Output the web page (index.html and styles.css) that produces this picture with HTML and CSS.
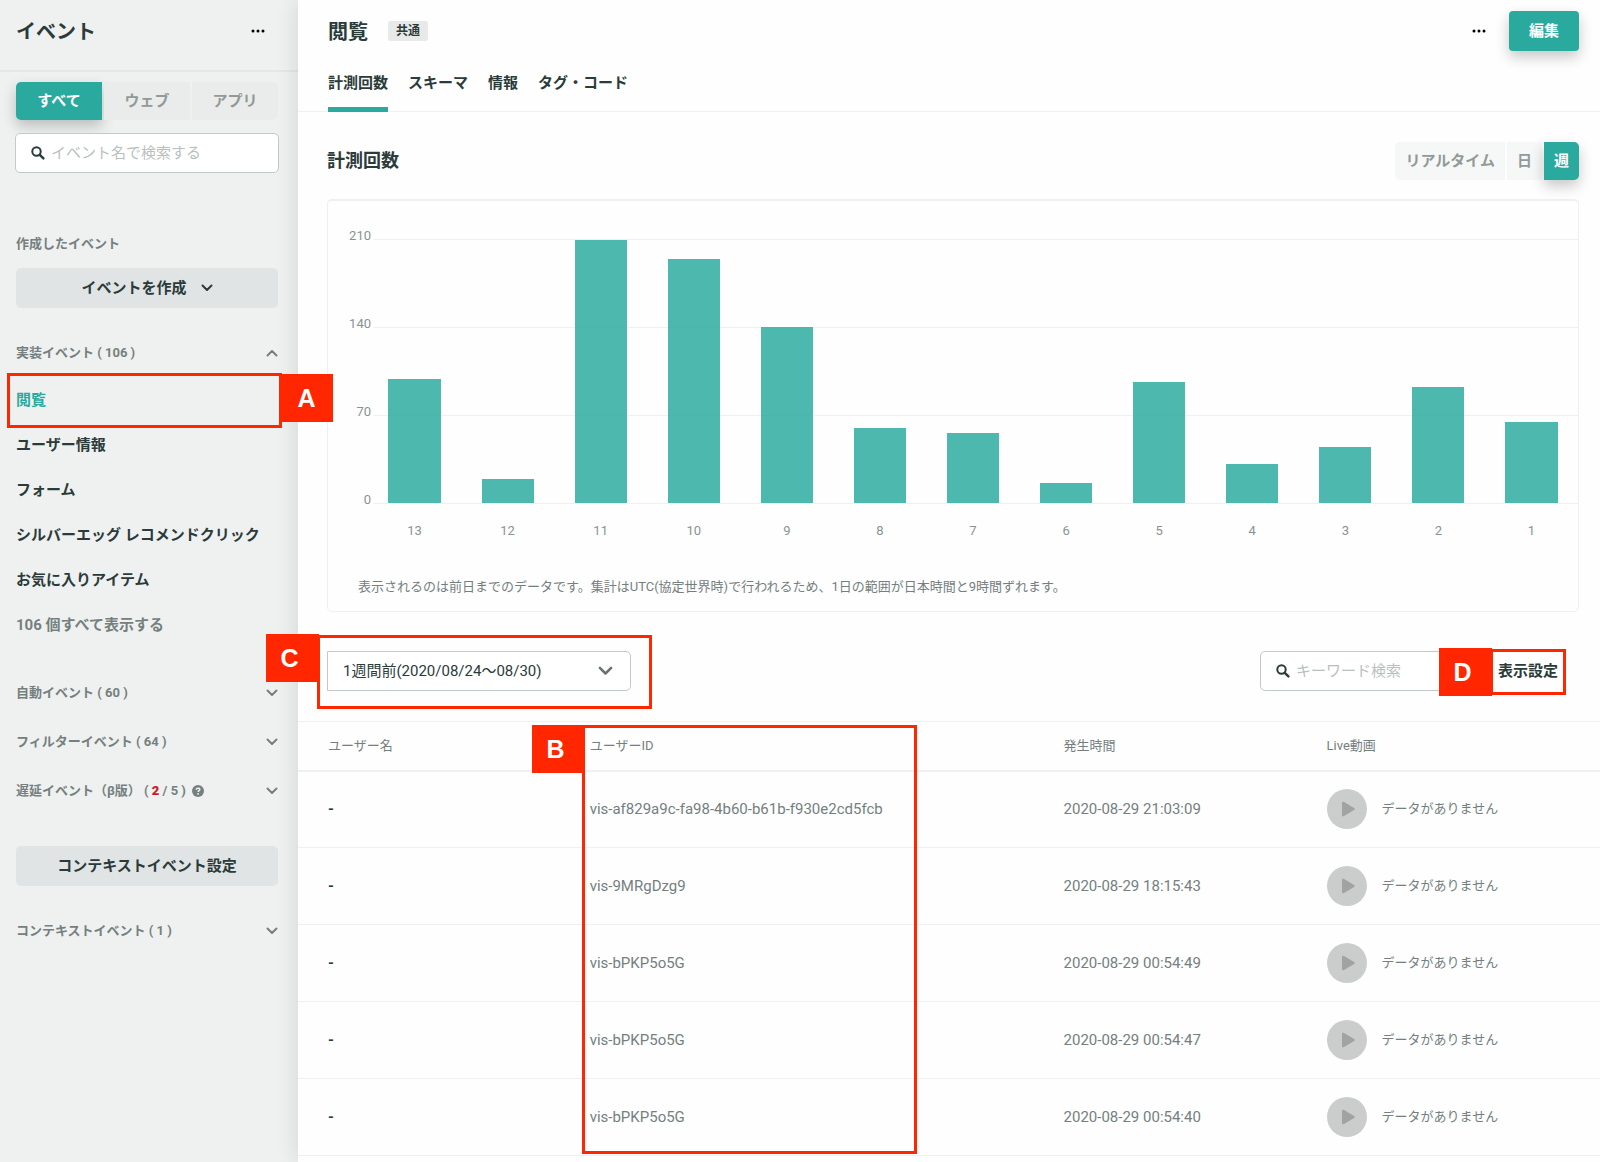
FILE: index.html
```html
<!DOCTYPE html>
<html lang="ja">
<head>
<meta charset="utf-8">
<meta name="viewport" content="width=device-width, initial-scale=1">
<title>閲覧 - イベント</title>
<link rel="stylesheet" href="styles.css">
</head>
<body>
<svg class="sprite" aria-hidden="true">
  <symbol id="dots" viewBox="0 0 14 4"><circle cx="2" cy="2" r="1.5"/><circle cx="7" cy="2" r="1.5"/><circle cx="12" cy="2" r="1.5"/></symbol>
  <symbol id="chevron" viewBox="0 0 12 8"><path d="M1.5 1.5 6 6l4.500-4.500" fill="none" stroke="currentColor" stroke-width="2" stroke-linecap="round" stroke-linejoin="round"/></symbol>
  <symbol id="search" viewBox="0 0 14 14"><circle cx="5.500" cy="5.500" r="4.200" fill="none" stroke="currentColor" stroke-width="2"/><path d="m8.800 8.800 3.600 3.600" stroke="currentColor" stroke-width="2.400" stroke-linecap="round"/></symbol>
  <symbol id="play" viewBox="0 0 40 40"><circle cx="20" cy="20" r="20" fill="#cbcdcc"/><path d="M15 14.200c0-1.400 1-1.800 2.100-1.200l10 6c1 .6 1 1.500 0 2.100l-10 6c-1.100.6-2.100.2-2.100-1.100z" fill="#9fa4a3"/></symbol>
</svg>
<div class="app">
  <aside class="sidebar">
    <header class="sidebar-head">
      <h1>イベント</h1>
      <button class="more" aria-label="メニュー"><svg width="14" height="4"><use href="#dots"/></svg></button>
    </header>
    <div class="sidebar-body">
      <div class="segments fill">
        <button class="active">すべて</button><button>ウェブ</button><button>アプリ</button>
      </div>
      <label class="search side-search"><svg width="14" height="14"><use href="#search"/></svg><input type="search" placeholder="イベント名で検索する" aria-label="イベント名で検索する"></label>
      <h2 class="side-label">作成したイベント</h2>
      <button class="block-button">イベントを作成<svg width="12" height="8"><use href="#chevron"/></svg></button>
      <button class="group first">実装イベント ( 106 )<svg class="up" width="12" height="8"><use href="#chevron"/></svg></button>
      <ul class="events">
        <li class="current"><a href="#">閲覧</a><span class="mark-box mark-a"></span><span class="mark-tag tag-a">A</span></li>
        <li><a href="#">ユーザー情報</a></li>
        <li><a href="#">フォーム</a></li>
        <li><a href="#">シルバーエッグ レコメンドクリック</a></li>
        <li><a href="#">お気に入りアイテム</a></li>
        <li class="all"><a href="#">106 個すべて表示する</a></li>
      </ul>
      <button class="group">自動イベント ( 60 )<svg width="12" height="8"><use href="#chevron"/></svg></button>
      <button class="group">フィルターイベント ( 64 )<svg width="12" height="8"><use href="#chevron"/></svg></button>
      <button class="group"><span class="group-name">遅延イベント（β版） ( <b>2</b> / 5 )<svg class="help" width="12" height="12" viewBox="0 0 12 12"><circle cx="6" cy="6" r="6" fill="currentColor"/><path d="M4.200 4.700c.1-2 3.600-2.100 3.600-.2 0 1.200-1.700 1.200-1.700 2.500" fill="none" stroke="#eff1f1" stroke-width="1.500"/><circle cx="6.100" cy="8.900" r=".9" fill="#eff1f1"/></svg></span><svg width="12" height="8"><use href="#chevron"/></svg></button>
      <button class="block-button context">コンテキストイベント設定</button>
      <button class="group">コンテキストイベント ( 1 )<svg width="12" height="8"><use href="#chevron"/></svg></button>
    </div>
  </aside>

  <main class="main">
    <header class="main-head">
      <h1>閲覧</h1>
      <span class="badge">共通</span>
      <button class="more" aria-label="メニュー"><svg width="14" height="4"><use href="#dots"/></svg></button>
      <button class="primary">編集</button>
    </header>
    <nav class="tabs">
      <a class="active" href="#">計測回数</a><a href="#">スキーマ</a><a href="#">情報</a><a href="#">タグ・コード</a>
    </nav>

    <section class="counts">
      <div class="section-head">
        <h2>計測回数</h2>
        <div class="segments">
          <button>リアルタイム</button><button>日</button><button class="active">週</button>
        </div>
      </div>
      <div class="card">
        <div class="chart">
          <div class="scale">
            <div><span>210</span></div><div><span>140</span></div><div><span>70</span></div><div><span>0</span></div>
          </div>
          <div class="bars">
            <i style="height:47.1%"></i><i style="height:9%"></i><i style="height:99.5%"></i><i style="height:92.4%"></i><i style="height:66.7%"></i><i style="height:28.6%"></i><i style="height:26.7%"></i><i style="height:7.6%"></i><i style="height:45.7%"></i><i style="height:14.8%"></i><i style="height:21.4%"></i><i style="height:43.8%"></i><i style="height:30.5%"></i>
          </div>
        </div>
        <div class="weeks">
          <span>13</span><span>12</span><span>11</span><span>10</span><span>9</span><span>8</span><span>7</span><span>6</span><span>5</span><span>4</span><span>3</span><span>2</span><span>1</span>
        </div>
        <p class="note">表示されるのは前日までのデータです。集計はUTC(協定世界時)で行われるため、1日の範囲が日本時間と9時間ずれます。</p>
      </div>
    </section>

    <div class="toolbar">
      <div class="period">
        <select aria-label="期間"><option>1週間前(2020/08/24〜08/30)</option></select>
        <svg width="15" height="10"><use href="#chevron"/></svg>
        <span class="mark-box mark-c"></span><span class="mark-tag tag-c">C</span>
      </div>
      <label class="search"><svg width="14" height="14"><use href="#search"/></svg><input type="search" placeholder="キーワード検索" aria-label="キーワード検索"></label>
      <div class="display">
        <button>表示設定</button>
        <span class="mark-box mark-d"></span><span class="mark-tag tag-d">D</span>
      </div>
    </div>

    <div class="log">
      <table>
        <thead><tr><th>ユーザー名</th><th>ユーザーID</th><th>発生時間</th><th>Live動画</th></tr></thead>
        <tbody>
          <tr><td>-</td><td>vis-af829a9c-fa98-4b60-b61b-f930e2cd5fcb</td><td>2020-08-29 21:03:09</td><td><span class="video"><svg width="40" height="40"><use href="#play"/></svg>データがありません</span></td></tr>
          <tr><td>-</td><td>vis-9MRgDzg9</td><td>2020-08-29 18:15:43</td><td><span class="video"><svg width="40" height="40"><use href="#play"/></svg>データがありません</span></td></tr>
          <tr><td>-</td><td>vis-bPKP5o5G</td><td>2020-08-29 00:54:49</td><td><span class="video"><svg width="40" height="40"><use href="#play"/></svg>データがありません</span></td></tr>
          <tr><td>-</td><td>vis-bPKP5o5G</td><td>2020-08-29 00:54:47</td><td><span class="video"><svg width="40" height="40"><use href="#play"/></svg>データがありません</span></td></tr>
          <tr><td>-</td><td>vis-bPKP5o5G</td><td>2020-08-29 00:54:40</td><td><span class="video"><svg width="40" height="40"><use href="#play"/></svg>データがありません</span></td></tr>
        </tbody>
      </table>
      <span class="mark-box mark-b"></span><span class="mark-tag tag-b">B</span>
    </div>
  </main>
</div>
</body>
</html>
```
FILE: styles.css
```css
:root {
  --ink: #2b3b39;
  --muted: #75807e;
  --line: #eff1f1;
  --teal: #2aaa9f;
  --red: #ff2600;
}

* { box-sizing: border-box; }

body {
  margin: 0;
  background: #fefefe;
  color: var(--ink);
  font: 15px/24px Roboto, "Noto Sans CJK JP", sans-serif;
}

h1, h2, p, ul { margin: 0; padding: 0; }
h1 { padding-top: 2px; font-size: 20px; font-weight: 700; line-height: 30px; }
a { color: inherit; text-decoration: none; }
svg { display: block; flex: none; }
.sprite { display: none; }

button, input, select { font: inherit; color: inherit; }
button { border: 0; padding: 0; background: none; cursor: pointer; }

.app {
  display: grid;
  grid-template-columns: 298px minmax(0, 1fr);
  min-height: 100vh;
}

/* Sidebar */
.sidebar { background: #eff1f1; }

.sidebar-head {
  display: flex;
  justify-content: space-between;
  align-items: center;
  height: 72px;
  padding: 0 33px 8px 16px;
  border-bottom: 2px solid #e5e7e7;
}

.more { padding: 8px 0; }

.sidebar-body { padding: 10px 20px 24px 16px; }

.segments { display: flex; gap: 2px; }

.segments button {
  height: 38px;
  padding: 0 10px;
  background: #f6f7f7;
  color: #929a98;
  font-weight: 700;
}

.segments button:first-child { border-radius: 5px 0 0 5px; }
.segments button:last-child { border-radius: 0 5px 5px 0; }
.segments.fill button { flex: 1; background: #eaecec; }

.segments .active,
.segments.fill .active {
  background: var(--teal);
  color: #fff;
  box-shadow: 0 6px 14px rgba(0, 0, 0, .22);
}

.search {
  display: flex;
  align-items: center;
  gap: 6px;
  width: 220px;
  height: 40px;
  padding: 0 15px;
  border: 1px solid #c3c9c8;
  border-radius: 5px;
  background: #fff;
}

.search input {
  flex: 1;
  min-width: 0;
  padding: 0;
  border: 0;
  outline: 0;
  background: none;
}

.search input::placeholder { color: #b9bfbe; }
.side-search { position: relative; width: auto; margin: 13px -1px 59px; }

.side-label,
.group { color: var(--muted); font-size: 13px; font-weight: 700; }
.side-label { margin-bottom: 12px; line-height: 24px; }

.block-button {
  display: flex;
  justify-content: center;
  align-items: center;
  gap: 14px;
  width: 100%;
  height: 40px;
  border-radius: 5px;
  background: #e0e4e5;
  font-weight: 700;
}

.group {
  display: flex;
  justify-content: space-between;
  align-items: center;
  width: 100%;
  height: 49px;
}

.group.first { height: 42px; margin: 24px 0 4px; }
.group b { color: #d0191f; }
.group-name { display: flex; align-items: center; white-space: pre; }
.help { margin-left: 6px; }
.up { transform: rotate(180deg); }

.events { margin-bottom: 20px; list-style: none; font-weight: 700; }
.events li { position: relative; line-height: 45px; }
.events .current { color: var(--teal); }
.events .all { color: var(--muted); }
.context { margin: 31px 0 20px; }

/* Main column */
.main { z-index: 1; box-shadow: 0 0 22px rgba(0, 0, 0, .12); background: #fefefe; }

.main-head {
  display: flex;
  align-items: center;
  height: 62px;
  padding: 0 21px 0 30px;
}

.badge {
  margin-left: 20px;
  padding: 0 8px;
  border-radius: 2px;
  background: #e8eaea;
  font-size: 12px;
  font-weight: 700;
  line-height: 20px;
}

.main-head .more { margin-left: auto; }

.primary {
  height: 40px;
  margin-left: 23px;
  padding: 0 20px;
  border-radius: 4px;
  background: var(--teal);
  color: #fff;
  font-weight: 700;
  box-shadow: 0 6px 14px rgba(0, 0, 0, .22);
}

.tabs {
  display: flex;
  gap: 20px;
  height: 50px;
  padding: 0 30px;
  border-bottom: 1px solid var(--line);
  font-weight: 700;
}

.tabs a { height: 50px; padding-top: 9px; border-bottom: 5px solid transparent; }
.tabs .active { border-color: var(--teal); }

.counts { padding: 30px 21px 0 29px; }
.section-head { display: flex; justify-content: space-between; align-items: center; margin-bottom: 19px; }
.section-head h2 { font-size: 18px; font-weight: 700; }

.card {
  padding: 38px 0 12px;
  border: 1px solid var(--line);
  border-top-width: 2px;
  border-radius: 5px;
}

/* Scale and bars share one grid cell; 88px stands for 70 counts */
.chart { display: grid; height: 264px; }
.scale, .bars { grid-area: 1 / 1; }

.scale div {
  display: flex;
  gap: 2px;
  height: 88px;
  color: #8a9391;
  font-size: 13px;
}

.scale div::after { content: ""; flex: 1; height: 1px; background: var(--line); }
.scale span { width: 43px; margin-top: -15px; text-align: right; }

.bars, .weeks { display: grid; grid-template-columns: repeat(13, 1fr); padding-left: 40px; }
.bars { align-items: end; height: 264px; }
.bars i { width: 56%; margin: 0 auto; background: rgba(42, 170, 159, .84); }

.weeks { margin-top: 16px; color: #8a9391; font-size: 13px; text-align: center; }
.note { margin: 32px 30px 0; color: var(--muted); font-size: 13px; }

.toolbar { display: flex; align-items: center; padding: 39px 42px 30px 29px; }
.period { position: relative; width: 304px; }

.period select {
  width: 100%;
  height: 40px;
  padding: 0 15px;
  border: 1px solid #c3c9c8;
  border-radius: 0 5px 5px 0;
  appearance: none;
  background: #fff;
}

.period svg { position: absolute; right: 18px; top: 15px; color: #687371; pointer-events: none; }
.toolbar .search { margin-left: auto; }
.display { position: relative; margin-left: 18px; font-weight: 700; }
.display button { height: 40px; }

.log { position: relative; }
table { width: 100%; border-collapse: collapse; table-layout: fixed; color: var(--muted); text-align: left; }

th {
  height: 49px;
  padding: 0;
  border-top: 1px solid var(--line);
  border-bottom: 2px solid var(--line);
  font-size: 13px;
  font-weight: 400;
}

th:nth-child(1) { width: 22.4%; }
th:nth-child(2) { width: 36.4%; }
th:nth-child(3) { width: 20.2%; }
td { height: 77px; padding: 0; border-bottom: 1px solid var(--line); }
th:first-child, td:first-child { padding-left: 30px; }
td:first-child { color: var(--ink); font-weight: 700; }
.video { display: flex; align-items: center; gap: 15px; font-size: 13px; }

/* Callouts laid over the screen */
.mark-box { position: absolute; border: 3px solid var(--red); pointer-events: none; }

.mark-tag {
  position: absolute;
  z-index: 2;
  width: 53px;
  height: 48px;
  padding-right: 6px;
  background: var(--red);
  color: #fff;
  font: 700 25px/48px "Liberation Sans", sans-serif;
  text-align: center;
}

.mark-a { left: -9px; right: -4px; top: -5px; bottom: -5px; }
.tag-a { right: -55px; top: -4px; padding-right: 0; }
.events .current { z-index: 3; }
.mark-b { left: 284px; right: 683px; top: 4px; bottom: 2px; }
.tag-b { left: 234px; top: 4px; }
.mark-c { left: -10px; right: -21px; top: -16px; bottom: -18px; }
.tag-c { left: -61px; top: -17px; }
.mark-d { left: -8px; right: -8px; top: -2px; bottom: -4px; }
.tag-d { left: -59px; top: -3px; }
```
